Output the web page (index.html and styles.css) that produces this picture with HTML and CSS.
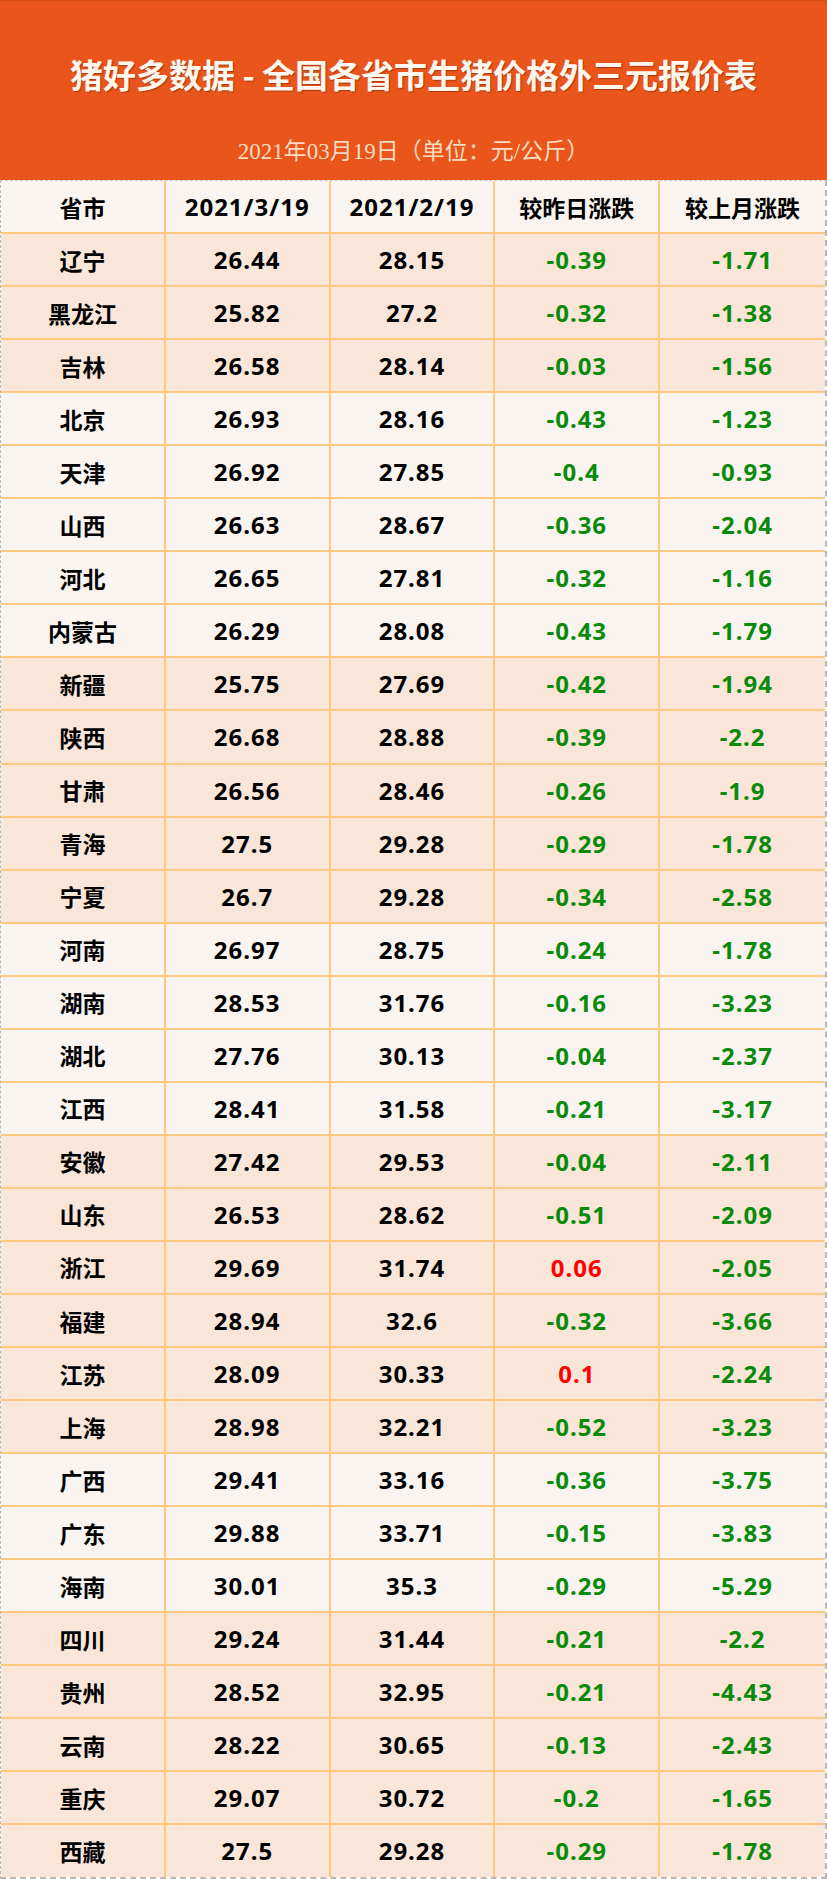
FILE: index.html
```html
<!DOCTYPE html>
<html lang="zh-CN">
<head>
<meta charset="utf-8">
<title>猪好多数据 - 全国各省市生猪价格外三元报价表</title>
<link rel="stylesheet" href="styles.css">
</head>
<body>
<div class="page">
  <header class="banner">
    <h1 class="title">猪好多数据 - 全国各省市生猪价格外三元报价表</h1>
    <p class="subtitle">2021年03月19日（单位：元/公斤）</p>
  </header>
  <div class="sheet">
    <div class="row head">
      <div class="cell cn">省市</div><div class="cell num">2021/3/19</div><div class="cell num">2021/2/19</div><div class="cell cn">较昨日涨跌</div><div class="cell cn">较上月涨跌</div>
    </div>
    <div class="row peach"><div class="cell cn">辽宁</div><div class="cell num">26.44</div><div class="cell num">28.15</div><div class="cell num down">-0.39</div><div class="cell num down">-1.71</div></div>
    <div class="row peach"><div class="cell cn">黑龙江</div><div class="cell num">25.82</div><div class="cell num">27.2</div><div class="cell num down">-0.32</div><div class="cell num down">-1.38</div></div>
    <div class="row peach"><div class="cell cn">吉林</div><div class="cell num">26.58</div><div class="cell num">28.14</div><div class="cell num down">-0.03</div><div class="cell num down">-1.56</div></div>
    <div class="row light"><div class="cell cn">北京</div><div class="cell num">26.93</div><div class="cell num">28.16</div><div class="cell num down">-0.43</div><div class="cell num down">-1.23</div></div>
    <div class="row light"><div class="cell cn">天津</div><div class="cell num">26.92</div><div class="cell num">27.85</div><div class="cell num down">-0.4</div><div class="cell num down">-0.93</div></div>
    <div class="row light"><div class="cell cn">山西</div><div class="cell num">26.63</div><div class="cell num">28.67</div><div class="cell num down">-0.36</div><div class="cell num down">-2.04</div></div>
    <div class="row light"><div class="cell cn">河北</div><div class="cell num">26.65</div><div class="cell num">27.81</div><div class="cell num down">-0.32</div><div class="cell num down">-1.16</div></div>
    <div class="row light"><div class="cell cn">内蒙古</div><div class="cell num">26.29</div><div class="cell num">28.08</div><div class="cell num down">-0.43</div><div class="cell num down">-1.79</div></div>
    <div class="row peach"><div class="cell cn">新疆</div><div class="cell num">25.75</div><div class="cell num">27.69</div><div class="cell num down">-0.42</div><div class="cell num down">-1.94</div></div>
    <div class="row peach"><div class="cell cn">陕西</div><div class="cell num">26.68</div><div class="cell num">28.88</div><div class="cell num down">-0.39</div><div class="cell num down">-2.2</div></div>
    <div class="row peach"><div class="cell cn">甘肃</div><div class="cell num">26.56</div><div class="cell num">28.46</div><div class="cell num down">-0.26</div><div class="cell num down">-1.9</div></div>
    <div class="row peach"><div class="cell cn">青海</div><div class="cell num">27.5</div><div class="cell num">29.28</div><div class="cell num down">-0.29</div><div class="cell num down">-1.78</div></div>
    <div class="row peach"><div class="cell cn">宁夏</div><div class="cell num">26.7</div><div class="cell num">29.28</div><div class="cell num down">-0.34</div><div class="cell num down">-2.58</div></div>
    <div class="row light"><div class="cell cn">河南</div><div class="cell num">26.97</div><div class="cell num">28.75</div><div class="cell num down">-0.24</div><div class="cell num down">-1.78</div></div>
    <div class="row light"><div class="cell cn">湖南</div><div class="cell num">28.53</div><div class="cell num">31.76</div><div class="cell num down">-0.16</div><div class="cell num down">-3.23</div></div>
    <div class="row light"><div class="cell cn">湖北</div><div class="cell num">27.76</div><div class="cell num">30.13</div><div class="cell num down">-0.04</div><div class="cell num down">-2.37</div></div>
    <div class="row light"><div class="cell cn">江西</div><div class="cell num">28.41</div><div class="cell num">31.58</div><div class="cell num down">-0.21</div><div class="cell num down">-3.17</div></div>
    <div class="row peach"><div class="cell cn">安徽</div><div class="cell num">27.42</div><div class="cell num">29.53</div><div class="cell num down">-0.04</div><div class="cell num down">-2.11</div></div>
    <div class="row peach"><div class="cell cn">山东</div><div class="cell num">26.53</div><div class="cell num">28.62</div><div class="cell num down">-0.51</div><div class="cell num down">-2.09</div></div>
    <div class="row peach"><div class="cell cn">浙江</div><div class="cell num">29.69</div><div class="cell num">31.74</div><div class="cell num up">0.06</div><div class="cell num down">-2.05</div></div>
    <div class="row peach"><div class="cell cn">福建</div><div class="cell num">28.94</div><div class="cell num">32.6</div><div class="cell num down">-0.32</div><div class="cell num down">-3.66</div></div>
    <div class="row peach"><div class="cell cn">江苏</div><div class="cell num">28.09</div><div class="cell num">30.33</div><div class="cell num up">0.1</div><div class="cell num down">-2.24</div></div>
    <div class="row peach"><div class="cell cn">上海</div><div class="cell num">28.98</div><div class="cell num">32.21</div><div class="cell num down">-0.52</div><div class="cell num down">-3.23</div></div>
    <div class="row light"><div class="cell cn">广西</div><div class="cell num">29.41</div><div class="cell num">33.16</div><div class="cell num down">-0.36</div><div class="cell num down">-3.75</div></div>
    <div class="row light"><div class="cell cn">广东</div><div class="cell num">29.88</div><div class="cell num">33.71</div><div class="cell num down">-0.15</div><div class="cell num down">-3.83</div></div>
    <div class="row light"><div class="cell cn">海南</div><div class="cell num">30.01</div><div class="cell num">35.3</div><div class="cell num down">-0.29</div><div class="cell num down">-5.29</div></div>
    <div class="row peach"><div class="cell cn">四川</div><div class="cell num">29.24</div><div class="cell num">31.44</div><div class="cell num down">-0.21</div><div class="cell num down">-2.2</div></div>
    <div class="row peach"><div class="cell cn">贵州</div><div class="cell num">28.52</div><div class="cell num">32.95</div><div class="cell num down">-0.21</div><div class="cell num down">-4.43</div></div>
    <div class="row peach"><div class="cell cn">云南</div><div class="cell num">28.22</div><div class="cell num">30.65</div><div class="cell num down">-0.13</div><div class="cell num down">-2.43</div></div>
    <div class="row peach"><div class="cell cn">重庆</div><div class="cell num">29.07</div><div class="cell num">30.72</div><div class="cell num down">-0.2</div><div class="cell num down">-1.65</div></div>
    <div class="row peach last"><div class="cell cn">西藏</div><div class="cell num">27.5</div><div class="cell num">29.28</div><div class="cell num down">-0.29</div><div class="cell num down">-1.78</div></div>
  </div>
</div>
</body>
</html>
```
FILE: styles.css
```css
html, body {
  margin: 0;
  padding: 0;
  background: #ffffff;
}

.page {
  width: 827px;
  font-family: "Noto Sans", "Noto Sans CJK SC", sans-serif;
}

.banner {
  height: 180px;
  box-sizing: border-box;
  background: #e9551a;
  border-top: 1px solid #d44c14;
  padding-top: 53px;
  display: flex;
  flex-direction: column;
  align-items: center;
}

.title {
  margin: 0;
  height: 40px;
  line-height: 40px;
  font-family: "Noto Sans CJK SC", sans-serif;
  font-size: 33px;
  font-weight: 700;
  color: #fff6ee;
  text-shadow: 1px 1px 1px rgba(110, 35, 0, 0.55);
  white-space: nowrap;
}

.subtitle {
  margin: 43px 0 0;
  height: 30px;
  line-height: 30px;
  font-family: "Liberation Serif", "Noto Sans CJK SC", serif;
  font-size: 23px;
  font-weight: 400;
  color: #f7dcc2;
  white-space: nowrap;
}

.sheet {
  border-top: 1px dashed #cfc6bd;
  border-left: 1px dashed #b9b9b9;
  border-right: 2px dashed #b9b9b9;
  border-bottom: 2px dashed #b9b9b9;
}

.row {
  display: grid;
  grid-template-columns: repeat(5, 1fr);
  height: 53.06px;
  box-sizing: border-box;
  border-bottom: 2px solid #fdc97f;
}

.row.last {
  border-bottom: none;
  height: 51.06px;
}

.head,
.light {
  background: #f9f4f0;
}

.peach {
  background: #fae5d9;
}

.cell {
  display: flex;
  align-items: center;
  justify-content: center;
  border-right: 2px solid #fdc97f;
  font-weight: 700;
  color: #000000;
  white-space: nowrap;
}

.cell:last-child {
  border-right: none;
}

.cn {
  font-family: "Noto Sans CJK SC", sans-serif;
  font-size: 23px;
}

.num {
  font-family: "Noto Sans", "Noto Sans CJK SC", sans-serif;
  font-size: 24px;
  letter-spacing: 1px;
}

.down {
  color: #0a8a0a;
}

.up {
  color: #ff0000;
}
```
